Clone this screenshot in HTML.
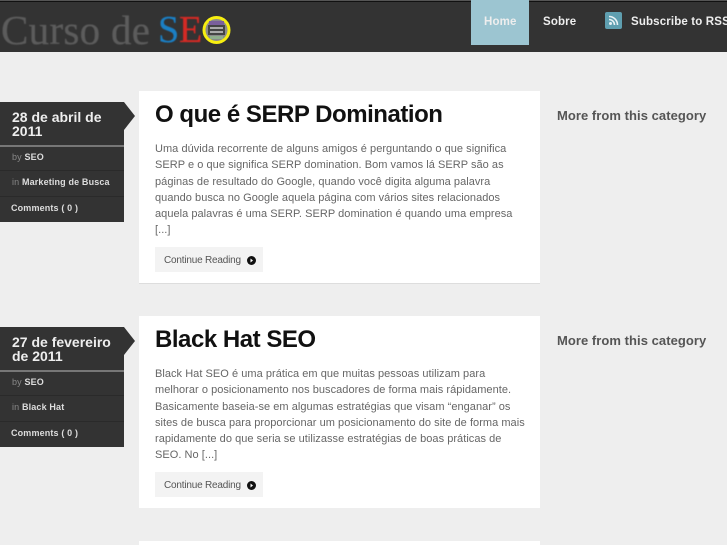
<!DOCTYPE html>
<html lang="pt">
<head>
<meta charset="utf-8">
<title>Curso de SEO</title>
<style>
html,body{margin:0;padding:0}
body{width:727px;height:545px;overflow:hidden;background:#eee;position:relative;font-family:"Liberation Sans",sans-serif}
.a{position:absolute;white-space:nowrap}
#hd{left:0;top:0;width:727px;height:52px;background:#333;border-top:1px solid #555;box-sizing:border-box;box-shadow:inset 0 1px 0 #111}
.logo{font-family:"Liberation Serif",serif;font-size:41px;line-height:40px;top:10px;color:#5c5c5c;-webkit-text-stroke:.3px;filter:blur(.4px)}
.nav{font-size:11.5px;font-weight:bold;color:#eee;line-height:14px;top:15px;letter-spacing:.15px}
.card{position:absolute;left:139px;width:401px;background:#fff;border-bottom:1px solid #ddd}
.title{left:155px;font-size:24px;font-weight:bold;color:#111;line-height:30px;letter-spacing:-.47px}
.body{left:155px;font-size:11px;line-height:16.3px;color:#666;letter-spacing:.04px}
.btn{left:155px;width:108px;height:25px;background:#f3f3f3;font-size:10px;line-height:27px;color:#555;box-sizing:border-box;padding-left:9px;letter-spacing:-.2px}
.btn svg{position:absolute;left:92px;top:8.5px}
.side{left:557px;font-size:13px;font-weight:bold;color:#555;line-height:14px;letter-spacing:.05px}
.meta{position:absolute;left:0;width:124px;background:#333}
.arrow{position:absolute;left:124px;width:0;height:0;border-left:11px solid #333;border-top:14.5px solid transparent;border-bottom:14.5px solid transparent}
.date{position:absolute;left:12px;top:8px;width:110px;font-size:14px;font-weight:bold;line-height:14px;color:#eee}
.row{position:absolute;left:0;width:124px;box-sizing:border-box;padding-left:12px;font-size:9px;color:#888;white-space:nowrap;border-top:1px solid #2a2a2a;letter-spacing:.15px}
.row b{color:#ddd}
.hr{position:absolute;left:0;top:43px;width:124px;height:2px;background:#777}
</style>
</head>
<body>
<div class="a" id="hd"></div>
<div class="a logo" style="left:1px;letter-spacing:.3px">Curso de</div>
<div class="a logo" style="left:158px;font-size:38px;color:#1b7fc4">S</div>
<div class="a logo" style="left:179px;font-size:38px;color:#d42a25">E</div>
<svg class="a" style="left:201px;top:15px" width="31" height="30" viewBox="0 0 31 30">
  <circle cx="15.5" cy="15" r="12.5" fill="#8a8a8a" stroke="#f6ee10" stroke-width="3"/>
  <rect x="8" y="6" width="15" height="4" fill="#7a5f9c"/>
  <rect x="7" y="10" width="17" height="10" fill="#444"/>
  <rect x="9" y="12" width="13" height="2" fill="#aaa"/>
  <rect x="9" y="16" width="13" height="2" fill="#aaa"/>
  <rect x="9" y="21" width="13" height="3" fill="#8fae8c"/>
</svg>

<div class="a" style="left:471px;top:0;width:58px;height:45px;background:#9cc5d1"></div>
<div class="a nav" style="left:484px">Home</div>
<div class="a nav" style="left:543px">Sobre</div>
<svg class="a" style="left:605px;top:12px" width="17" height="17" viewBox="0 0 17 17">
  <rect width="17" height="17" rx="2" fill="#5f9fb0"/>
  <circle cx="5.5" cy="11.5" r="1.5" fill="#e8f2f5"/>
  <path d="M4 7.5a5.5 5.5 0 0 1 5.5 5.5M4 4.5a8.5 8.5 0 0 1 8.5 8.5" fill="none" stroke="#e8f2f5" stroke-width="1.6"/>
</svg>
<div class="a nav" style="left:631px">Subscribe to RSS</div>

<!-- Post 1 -->
<div class="card" style="top:91px;height:192px"></div>
<div class="a title" style="top:100px">O que é SERP Domination</div>
<div class="a body" style="top:141px">Uma dúvida recorrente de alguns amigos é perguntando o que significa<br>SERP e o que significa SERP domination. Bom vamos lá SERP são as<br>páginas de resultado do Google, quando você digita alguma palavra<br>quando busca no Google aquela página com vários sites relacionados<br>aquela palavras é uma SERP. SERP domination é quando uma empresa<br>[...]</div>
<div class="a btn" style="top:247px">Continue Reading<svg width="9" height="9" viewBox="0 0 9 9"><circle cx="4.5" cy="4.5" r="4.5" fill="#111"/><path d="M3.5 2.5L6 4.5L3.5 6.5Z" fill="#fff"/></svg></div>
<div class="a side" style="top:109px">More from this category</div>

<div class="meta" style="top:102px;height:120px">
  <div class="date">28 de abril de 2011</div>
  <div class="hr"></div>
  <div class="row" style="top:45px;height:23px;line-height:20px;border-top:0">by <b>SEO</b></div>
  <div class="row" style="top:68px;height:26px;line-height:23px">in <b>Marketing de Busca</b></div>
  <div class="row" style="top:94px;height:26px;line-height:22px;padding-left:11px"><b>Comments ( 0 )</b></div>
</div>
<div class="arrow" style="top:102px"></div>

<!-- Post 2 -->
<div class="card" style="top:316px;height:192px;border-bottom:0"></div>
<div class="a title" style="top:325px">Black Hat SEO</div>
<div class="a body" style="top:366px">Black Hat SEO é uma prática em que muitas pessoas utilizam para<br>melhorar o posicionamento nos buscadores de forma mais rápidamente.<br>Basicamente baseia-se em algumas estratégias que visam “enganar” os<br>sites de busca para proporcionar um posicionamento do site de forma mais<br>rapidamente do que seria se utilizasse estratégias de boas práticas de<br>SEO. No [...]</div>
<div class="a btn" style="top:472px">Continue Reading<svg width="9" height="9" viewBox="0 0 9 9"><circle cx="4.5" cy="4.5" r="4.5" fill="#111"/><path d="M3.5 2.5L6 4.5L3.5 6.5Z" fill="#fff"/></svg></div>
<div class="a side" style="top:334px">More from this category</div>

<div class="meta" style="top:327px;height:120px">
  <div class="date">27 de fevereiro de 2011</div>
  <div class="hr"></div>
  <div class="row" style="top:45px;height:23px;line-height:20px;border-top:0">by <b>SEO</b></div>
  <div class="row" style="top:68px;height:26px;line-height:23px">in <b>Black Hat</b></div>
  <div class="row" style="top:94px;height:26px;line-height:22px;padding-left:11px"><b>Comments ( 0 )</b></div>
</div>
<div class="arrow" style="top:327px"></div>

<!-- Post 3 -->
<div class="card" style="top:541px;height:4px;border-bottom:0"></div>
</body>
</html>
